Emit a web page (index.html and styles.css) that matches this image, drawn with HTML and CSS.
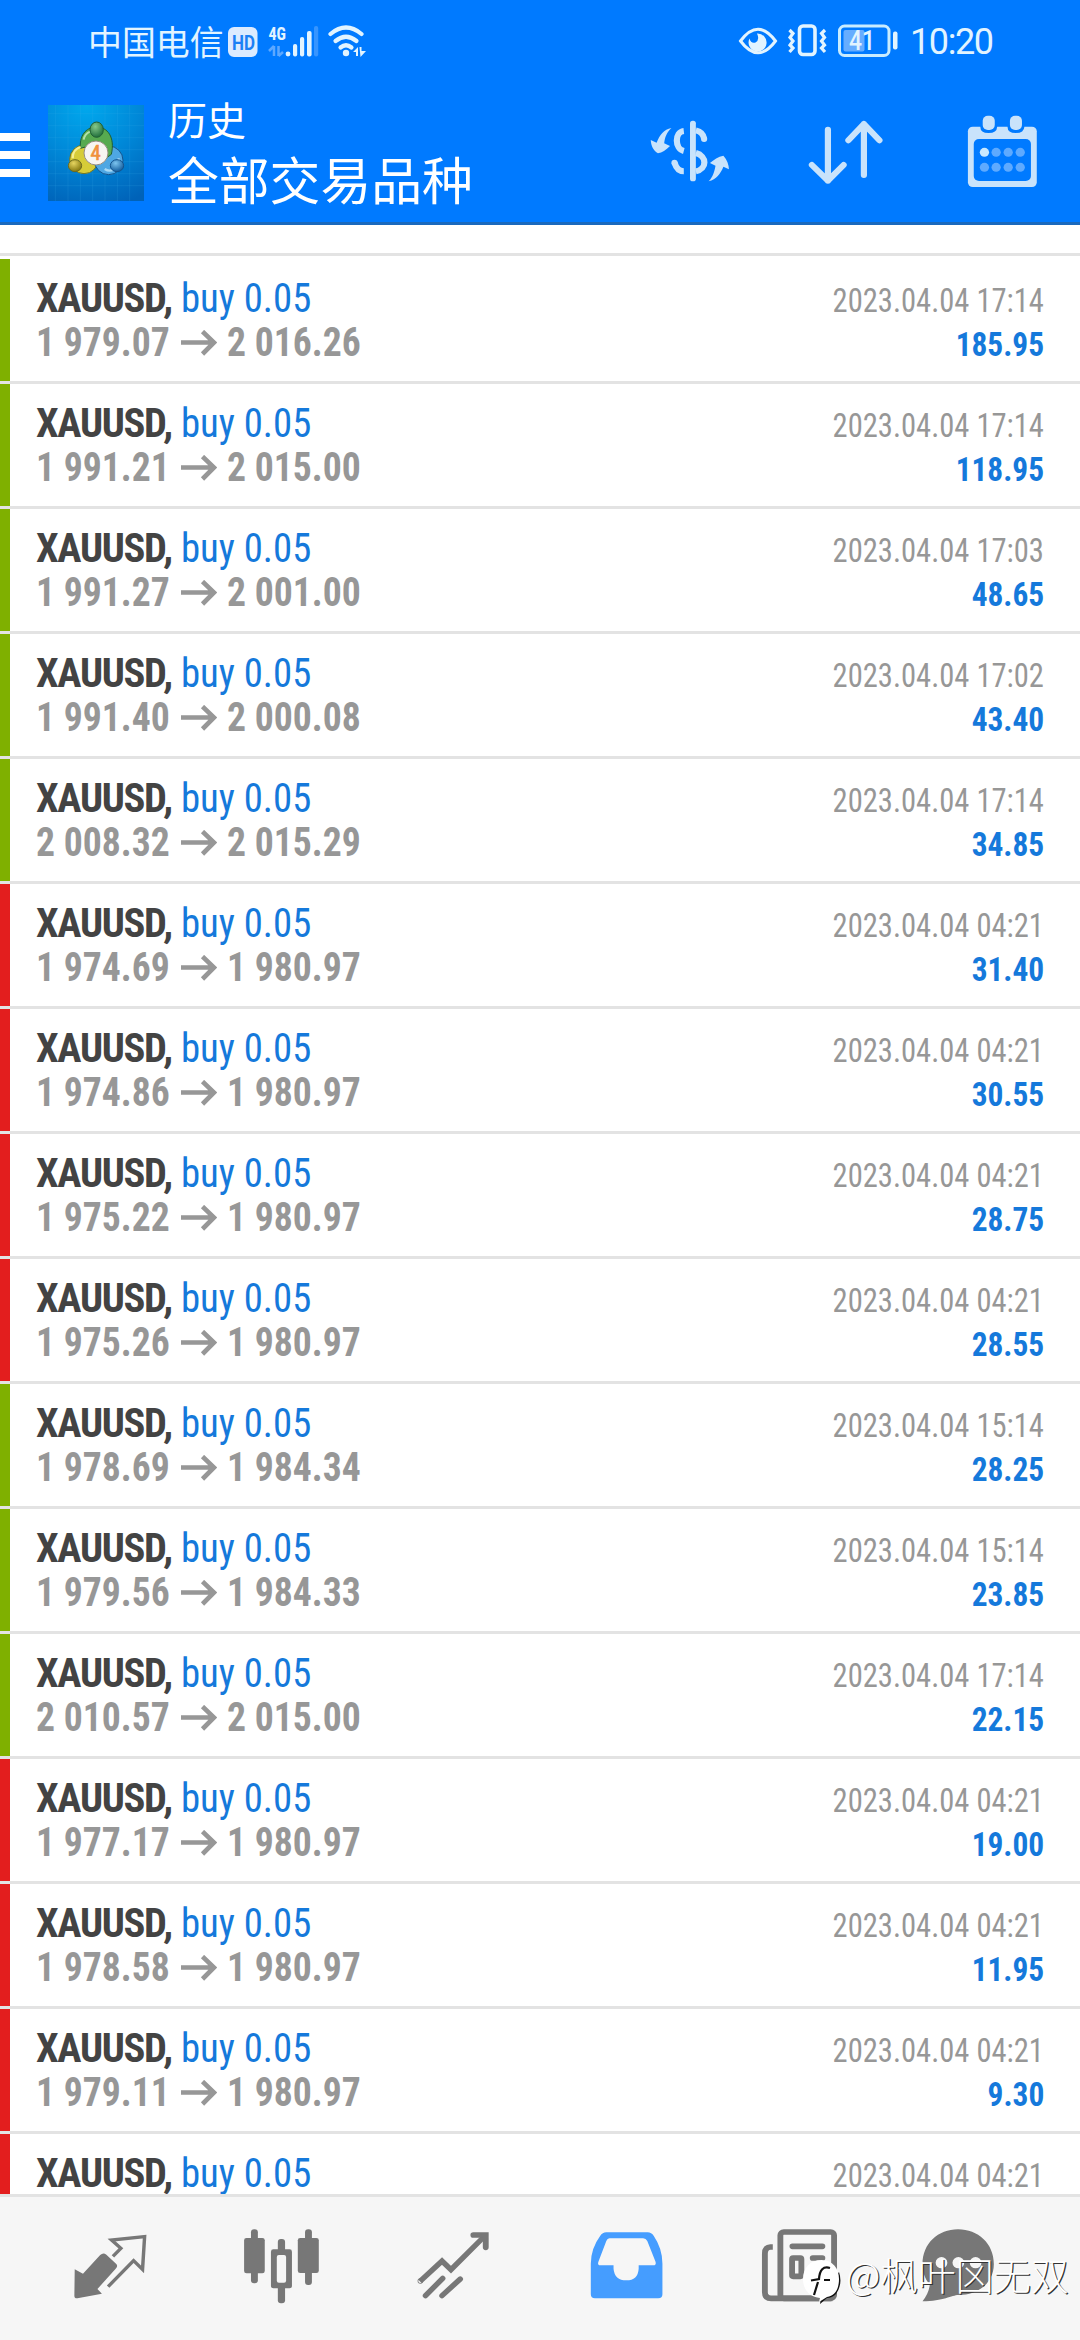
FILE: index.html
```html
<!DOCTYPE html>
<html lang="zh-CN">
<head>
<meta charset="utf-8">
<title>历史</title>
<link rel="stylesheet" href="styles.css">
</head>
<body>
<svg class="defs" aria-hidden="true"><symbol id="arrow" viewBox="0 0 36 26"><path d="M0 12.5H32M21.500 1.500L33 12.500L21.500 24" fill="none" stroke="#979797" stroke-width="4.600"/></symbol></svg>
<div class="app">
  <header class="header">
    <div class="status">
      <span class="carrier">中国电信</span>
      <svg class="status-left" width="140" height="36" viewBox="228 22 140 36">
        <rect x="228" y="26" width="29.500" height="30" rx="6" fill="#dcebff"/>
        <text x="232" y="48.500" class="hd" textLength="23" lengthAdjust="spacingAndGlyphs">HD</text>
        <text x="268.500" y="38.500" class="net" textLength="17.500" lengthAdjust="spacingAndGlyphs">4G</text>
        <path d="M274 45V55M269 50L274 45M278.500 45V55M283 51L278.500 55" stroke="#5da8ff" stroke-width="2.500" fill="none"/>
        <g fill="#e2f4ff"><circle cx="288" cy="53" r="2.400"/><rect x="293" y="43" width="4.200" height="12.500" rx="2"/><rect x="300" y="36" width="4.200" height="19.500" rx="2"/><rect x="307" y="30" width="4.600" height="25.500" rx="2"/></g>
        <rect x="314" y="25" width="4.200" height="30.500" rx="2" fill="#3795ff"/>
        <g fill="none" stroke="#e2f4ff" stroke-width="4.200" stroke-linecap="round"><path d="M330.500 33Q346 20 361.500 33"/><path d="M335.500 40Q346 31.500 356.500 40"/><path d="M340.500 46.500Q346 42 351.500 46.500"/></g>
        <circle cx="346" cy="52" r="3.200" fill="#e2f4ff"/>
        <path d="M353 51L358 46V55H356V51ZM359.500 46H361.500V50H366L360.500 56Z" fill="#e2f4ff"/>
      </svg>
      <svg class="status-right" width="160" height="38" viewBox="738 22 160 38">
        <path d="M740.500 41Q758 17.500 775.500 41Q758 64.500 740.500 41Z" fill="none" stroke="#e2f4ff" stroke-width="3"/>
        <path d="M757 33.500A9 9 0 1 1 749.500 38.500Q751 44 755.500 42.500Q760 40 757 33.500Z" fill="#e2f4ff"/>
        <rect x="799.500" y="26" width="15.500" height="28.500" rx="3.500" fill="none" stroke="#e2f4ff" stroke-width="3.600"/>
        <path d="M789.500 30L793 33.500L790 37.500L793 41L790 45L793 48L789.500 52M825 30L821.500 33.500L824.500 37.500L821.500 41L824.500 45L821.500 48L825 52" fill="none" stroke="#e2f4ff" stroke-width="3.200"/>
        <rect x="839.500" y="26" width="49.500" height="29.500" rx="5" fill="none" stroke="#c8ecff" stroke-width="3"/>
        <rect x="843.500" y="30" width="21" height="21.500" rx="2" fill="#66adff"/>
        <text x="849" y="50" class="battery" textLength="26" lengthAdjust="spacingAndGlyphs">41</text>
        <rect x="893" y="31.500" width="4.500" height="18" rx="2" fill="#e2f4ff"/>
      </svg>
      <span class="clock">10:20</span>
    </div>
    <div class="toolbar">
      <div class="menu"><i></i><i></i><i></i></div>
      <svg class="logo" viewBox="0 0 288 288" width="96" height="96">
        <defs>
          <radialGradient id="bg" cx=".4" cy="0" r="1.100"><stop offset="0" stop-color="#00a9ee"/><stop offset=".5" stop-color="#0088d8"/><stop offset="1" stop-color="#0062b8"/></radialGradient>
          <radialGradient id="gr" cx=".4" cy=".3" r=".7"><stop offset="0" stop-color="#86c98a"/><stop offset="1" stop-color="#216f3c"/></radialGradient>
          <radialGradient id="ye" cx=".4" cy=".3" r=".7"><stop offset="0" stop-color="#e6d560"/><stop offset="1" stop-color="#85780f"/></radialGradient>
          <radialGradient id="bl" cx=".4" cy=".3" r=".7"><stop offset="0" stop-color="#7cc4ef"/><stop offset="1" stop-color="#155e9e"/></radialGradient>
        </defs>
        <rect width="288" height="288" fill="url(#bg)"/>
        <path d="M22 0V288M60 0V288M97 0V288M134 0V288M171 0V288M208 0V288M245 0V288M0 26H288M0 62H288M0 98H288M0 134H288M0 170H288M0 206H288M0 242H288" stroke="#3ab2ec" stroke-opacity=".25" stroke-width="2"/>
        <g stroke-width="3">
          <circle cx="108" cy="163" r="43" fill="#d6cc38" stroke="#6d7428"/>
          <circle cx="182" cy="166" r="43" fill="#4ea7e3" stroke="#14538d"/>
          <path d="M97 130C94 84 120 66 146 66C178 66 202 96 190 148L160 170L128 122Z" fill="#57aa50" stroke="#215f34"/>
          <path d="M170 192C190 205 212 190 212 160" fill="none" stroke="#a6d8f5" stroke-width="7"/>
          <path d="M74 160C74 140 84 130 98 126" fill="none" stroke="#f5ee90" stroke-width="7"/>
          <path d="M107 104C109 90 117 84 126 80" fill="none" stroke="#b3e0a7" stroke-width="6"/>
          <ellipse cx="146" cy="74" rx="20" ry="23" fill="url(#gr)" stroke="#215f34"/>
          <ellipse cx="81" cy="182" rx="20" ry="18" fill="url(#ye)" stroke="#6d6a20"/>
          <ellipse cx="207" cy="182" rx="20" ry="18" fill="url(#bl)" stroke="#14538d"/>
          <circle cx="144" cy="144" r="36" fill="#f7f5f2" stroke="#968e83"/>
        </g>
        <text x="143" y="165" class="four">4</text>
      </svg>
      <div class="titles"><span class="title">历史</span><span class="subtitle">全部交易品种</span></div>
      <div class="actions">
        <svg viewBox="209.500 330 453 240" preserveAspectRatio="none" fill="#c9e3fb">
          <path d="M382 384C368 398 363 412 361 430L378 438C366 450 355 458 343 460C330 452 323 438 322 420L339 428C348 405 360 388 382 384Z"/>
          <path d="M490 544C503 530 507 515 510 497L494 489C505 479 518 470 533 467C544 480 549 494 549 508L533 500C524 522 513 538 490 544Z"/>
          <rect x="436" y="362" width="17" height="182" rx="8"/>
          <path d="M418 393C391 396 391 446 418 453M391 488C396 505 405 514 418 514M453 391Q474 396 477 416M453 459C486 468 486 507 453 514" fill="none" stroke="#c9e3fb" stroke-width="18"/>
          <circle cx="391" cy="488" r="9"/><circle cx="477" cy="417" r="9"/>
        </svg>
        <svg viewBox="662.500 330 453 240" preserveAspectRatio="none" fill="none" stroke="#c9e3fb" stroke-width="18" stroke-linecap="round" stroke-linejoin="round"><path d="M836.500 389V542M790 495L836.500 542L882 495M941 525V372M896 421L941 372L986 421"/></svg>
        <svg viewBox="1115.500 330 453 240" preserveAspectRatio="none">
          <rect x="1243" y="380" width="200" height="181" rx="14" fill="#c9e3fb"/>
          <rect x="1260" y="417" width="166" height="126" rx="15" fill="#007aff"/>
          <path d="M1279 378V380Q1279 399 1303 399T1328 380V378ZM1358 378V380Q1358 399 1382 399T1407 380V378Z" fill="#007aff"/>
          <rect x="1286" y="347" width="35" height="43" rx="15" fill="#c9e3fb"/><rect x="1365" y="347" width="35" height="43" rx="15" fill="#c9e3fb"/>
          <circle cx="1291" cy="457" r="13.500" fill="#c9e9ff"/>
          <g fill="#5eaaff"><circle cx="1325" cy="457" r="13.500"/><circle cx="1360" cy="457" r="13.500"/><circle cx="1395" cy="457" r="13.500"/><circle cx="1291" cy="502" r="13.500"/><circle cx="1325" cy="502" r="13.500"/><circle cx="1360" cy="502" r="13.500"/><circle cx="1395" cy="502" r="13.500"/></g>
        </svg>
      </div>
    </div>
  </header>

  <main class="list">
    <div class="deal up"><div class="line"><b class="symbol">XAUUSD,</b><span class="side">buy 0.05</span><time>2023.04.04 17:14</time></div><div class="line"><b class="price">1 979.07</b><svg class="to"><use href="#arrow"/></svg><b class="price">2 016.26</b><b class="profit">185.95</b></div></div>
    <div class="deal up"><div class="line"><b class="symbol">XAUUSD,</b><span class="side">buy 0.05</span><time>2023.04.04 17:14</time></div><div class="line"><b class="price">1 991.21</b><svg class="to"><use href="#arrow"/></svg><b class="price">2 015.00</b><b class="profit">118.95</b></div></div>
    <div class="deal up"><div class="line"><b class="symbol">XAUUSD,</b><span class="side">buy 0.05</span><time>2023.04.04 17:03</time></div><div class="line"><b class="price">1 991.27</b><svg class="to"><use href="#arrow"/></svg><b class="price">2 001.00</b><b class="profit">48.65</b></div></div>
    <div class="deal up"><div class="line"><b class="symbol">XAUUSD,</b><span class="side">buy 0.05</span><time>2023.04.04 17:02</time></div><div class="line"><b class="price">1 991.40</b><svg class="to"><use href="#arrow"/></svg><b class="price">2 000.08</b><b class="profit">43.40</b></div></div>
    <div class="deal up"><div class="line"><b class="symbol">XAUUSD,</b><span class="side">buy 0.05</span><time>2023.04.04 17:14</time></div><div class="line"><b class="price">2 008.32</b><svg class="to"><use href="#arrow"/></svg><b class="price">2 015.29</b><b class="profit">34.85</b></div></div>
    <div class="deal down"><div class="line"><b class="symbol">XAUUSD,</b><span class="side">buy 0.05</span><time>2023.04.04 04:21</time></div><div class="line"><b class="price">1 974.69</b><svg class="to"><use href="#arrow"/></svg><b class="price">1 980.97</b><b class="profit">31.40</b></div></div>
    <div class="deal down"><div class="line"><b class="symbol">XAUUSD,</b><span class="side">buy 0.05</span><time>2023.04.04 04:21</time></div><div class="line"><b class="price">1 974.86</b><svg class="to"><use href="#arrow"/></svg><b class="price">1 980.97</b><b class="profit">30.55</b></div></div>
    <div class="deal down"><div class="line"><b class="symbol">XAUUSD,</b><span class="side">buy 0.05</span><time>2023.04.04 04:21</time></div><div class="line"><b class="price">1 975.22</b><svg class="to"><use href="#arrow"/></svg><b class="price">1 980.97</b><b class="profit">28.75</b></div></div>
    <div class="deal down"><div class="line"><b class="symbol">XAUUSD,</b><span class="side">buy 0.05</span><time>2023.04.04 04:21</time></div><div class="line"><b class="price">1 975.26</b><svg class="to"><use href="#arrow"/></svg><b class="price">1 980.97</b><b class="profit">28.55</b></div></div>
    <div class="deal up"><div class="line"><b class="symbol">XAUUSD,</b><span class="side">buy 0.05</span><time>2023.04.04 15:14</time></div><div class="line"><b class="price">1 978.69</b><svg class="to"><use href="#arrow"/></svg><b class="price">1 984.34</b><b class="profit">28.25</b></div></div>
    <div class="deal up"><div class="line"><b class="symbol">XAUUSD,</b><span class="side">buy 0.05</span><time>2023.04.04 15:14</time></div><div class="line"><b class="price">1 979.56</b><svg class="to"><use href="#arrow"/></svg><b class="price">1 984.33</b><b class="profit">23.85</b></div></div>
    <div class="deal up"><div class="line"><b class="symbol">XAUUSD,</b><span class="side">buy 0.05</span><time>2023.04.04 17:14</time></div><div class="line"><b class="price">2 010.57</b><svg class="to"><use href="#arrow"/></svg><b class="price">2 015.00</b><b class="profit">22.15</b></div></div>
    <div class="deal down"><div class="line"><b class="symbol">XAUUSD,</b><span class="side">buy 0.05</span><time>2023.04.04 04:21</time></div><div class="line"><b class="price">1 977.17</b><svg class="to"><use href="#arrow"/></svg><b class="price">1 980.97</b><b class="profit">19.00</b></div></div>
    <div class="deal down"><div class="line"><b class="symbol">XAUUSD,</b><span class="side">buy 0.05</span><time>2023.04.04 04:21</time></div><div class="line"><b class="price">1 978.58</b><svg class="to"><use href="#arrow"/></svg><b class="price">1 980.97</b><b class="profit">11.95</b></div></div>
    <div class="deal down"><div class="line"><b class="symbol">XAUUSD,</b><span class="side">buy 0.05</span><time>2023.04.04 04:21</time></div><div class="line"><b class="price">1 979.11</b><svg class="to"><use href="#arrow"/></svg><b class="price">1 980.97</b><b class="profit">9.30</b></div></div>
    <div class="deal down"><div class="line"><b class="symbol">XAUUSD,</b><span class="side">buy 0.05</span><time>2023.04.04 04:21</time></div></div>
  </main>

  <nav class="tabs">
    <svg viewBox="199.400 380 240 240" preserveAspectRatio="none">
      <path d="M216 507L240 520L290 464Q299 455 308 463L336 490Q343 497 335 505L282 566L295 580L224 594Q215 595 215 586Z" fill="#777"/>
      <path d="M327 468L350 444L323 419L419 409L413 507L387 481L313 559" fill="none" stroke="#777" stroke-width="10"/>
    </svg>
    <svg viewBox="700 380 240 240" preserveAspectRatio="none" fill="#777">
      <rect x="729" y="387" width="20" height="162" rx="9"/><rect x="709" y="413" width="60" height="106" rx="7"/>
      <rect x="886" y="387" width="20" height="167" rx="9"/><rect x="865" y="413" width="61" height="105" rx="7"/>
      <rect x="807" y="416" width="21" height="193" rx="9"/><rect x="787" y="447" width="61" height="117" rx="7"/><rect x="804" y="464" width="27" height="83" rx="6" fill="#f6f6f6"/>
    </svg>
    <svg viewBox="1200.700 380 240 240" preserveAspectRatio="none" fill="none" stroke="#777" stroke-width="16">
      <path d="M1221 543L1285 482L1311 508L1409 407" /><path d="M1376 404H1412V441" stroke-width="17" stroke-linecap="round"/>
      <path d="M1237 586L1287 534M1285 586L1338 536" stroke-linecap="round"/><circle cx="1222" cy="542" r="1" stroke-width="14"/>
    </svg>
    <svg viewBox="133 380 240 240" preserveAspectRatio="none">
      <path d="M192 396H312Q323 396 330 407Q355 445 355 490V582Q355 594 343 594H159Q147 594 147 582V490Q147 445 174 407Q181 396 192 396Z" fill="#459dff"/>
      <path d="M201 414H299Q307 414 311 422L335 484Q338 495 328 495H286V505Q284 540 250 540Q216 540 213 505V495H176Q165 495 169 484L192 422Q195 414 201 414Z" fill="#f6f6f6"/>
    </svg>
    <svg viewBox="634 380 240 240" preserveAspectRatio="none" fill="none" stroke="#777" stroke-width="17">
      <rect x="699" y="395" width="156" height="199" rx="10"/><path d="M677 440H670Q654 441 654 460V576Q654 594 672 594H850"/><path d="M734 438H821M793 473H821M793 520H821" stroke-linecap="round"/>
      <rect x="733" y="473" width="27" height="55" rx="3"/>
    </svg>
    <svg viewBox="1134.500 380 240 240" preserveAspectRatio="none">
      <path d="M1110 491C1110 430 1155 387 1213 387S1317 430 1317 491C1317 550 1270 584 1214 584C1195 585 1170 602 1110 603C1121 588 1130 570 1131 552C1116 535 1110 515 1110 491Z" fill="#777"/>
      <g fill="#f6f6f6"><circle cx="1165" cy="487" r="17"/><circle cx="1214" cy="487" r="17"/><circle cx="1264" cy="487" r="17"/></g>
    </svg>
  </nav>

  <div class="watermark">
    <svg width="39" height="46" viewBox="0 0 39 46"><path d="M36 12Q40 24 33 34Q29 38 24 38L17 44L18 38Z" fill="#111"/><path d="M18.500 0C7 0 0 8 0 19S7 37 17 38L16 42L24 37C32 36 36 29 36 19S30 0 18.500 0Z" fill="#fff"/><path d="M27 8Q17 5 16 19L8 20.500M21 20H27M15 22L11 35" fill="none" stroke="#111" stroke-width="2.200"/></svg>
    <span>@枫叶龱无双</span>
  </div>
</div>
</body>
</html>
```
FILE: styles.css
```css
* { box-sizing: border-box; }
body { margin: 0; font-family: "Roboto Condensed", Roboto, "Noto Sans CJK SC", sans-serif; }
.defs { display: none; }
.app { position: relative; width: 1080px; height: 2340px; display: flex; flex-direction: column; overflow: hidden; background: #fff; }

.header { height: 225px; background: #007aff; border-bottom: 3px solid #1a69bd; color: #fff; }
.status { height: 82px; display: flex; padding: 0 88px 0 88px; align-items: center; color: #e2f4ff; }
.carrier { font: 400 33.900px/40px "Noto Sans CJK SC", sans-serif; width: 140px; white-space: nowrap; }
.status-right { margin-left: auto; margin-right: 12px; }
.clock { font: 400 36px/40px Roboto, sans-serif; letter-spacing: -1.400px; width: 82px; white-space: nowrap; padding-top: 2px; }
.hd { font: 700 21px Roboto, sans-serif; fill: #1b80f5; }
.net { font: 700 18px "Roboto Condensed", sans-serif; fill: #e2f4ff; }
.battery { font: 500 27px Roboto, sans-serif; fill: #e2f4ff; }

.toolbar { height: 140px; display: flex; align-items: flex-start; padding-top: 14px; }
.menu { width: 30px; height: 44px; margin: 37px 18px 0 0; display: flex; flex-direction: column; justify-content: space-between; }
.menu i { height: 8px; background: #fff; }
.logo { margin-top: 9px; }
.four { font: 400 62px "Roboto Condensed", sans-serif; fill: #f0913c; stroke: #f0913c; stroke-width: 2px; text-anchor: middle; }
.titles { margin: -3px 0 0 24px; display: flex; flex-direction: column; width: 444px; font-family: "Noto Sans CJK SC", sans-serif; }
.title { font-size: 39px; line-height: 50px; }
.subtitle { font-size: 50.800px; line-height: 70px; }
.actions { display: flex; margin-top: 14px; }
.actions svg { width: 156px; height: 80px; }

.list { flex: 1; min-height: 0; overflow: hidden; margin-top: 28px; border-top: 3px solid #e3e3e3; padding-top: 3px; }
.deal { height: 125px; padding: 17px 36px 0; border-bottom: 3px solid #e3e3e3; background: no-repeat left top / 10px 100%; }
.up { background-image: linear-gradient(#7fb000, #7fb000); }
.down { background-image: linear-gradient(#e31e1e, #e31e1e); }
.line { height: 44px; line-height: 44px; display: flex; align-items: baseline; white-space: nowrap; }
.symbol { font-size: 40.500px; letter-spacing: -1.300px; color: #434343; width: 145px; }
.side { font-size: 40.500px; color: #1579db; transform: scaleX(.955); transform-origin: left; }
.price { font-size: 40.500px; color: #979797; width: 135px; transform: scaleX(.93); transform-origin: left; }
.to { width: 36px; height: 26px; margin: 0 10px; align-self: center; position: relative; top: 1px; }
time { margin-left: auto; font-size: 33.400px; color: #979797; transform: scaleX(.915); transform-origin: right; }
.profit { margin-left: auto; font-size: 33.400px; color: #1579db; transform: scaleX(.94); transform-origin: right; }

.tabs { height: 146px; border-top: 3px solid #e3e3e3; background: #f6f6f6; display: flex; padding: 30px 0 0 68.700px; gap: 89.760px; }
.tabs svg { width: 82.640px; height: 80px; flex: none; overflow: visible; }

.watermark { position: absolute; left: 803px; top: 2260px; display: flex; align-items: flex-start; gap: 4px; color: #fff; }
.watermark span { font: 300 37.700px/36px "Noto Sans CJK SC", sans-serif; margin-top: -4px; text-shadow: 1.200px 1.200px 0 #333; white-space: nowrap; }
```
